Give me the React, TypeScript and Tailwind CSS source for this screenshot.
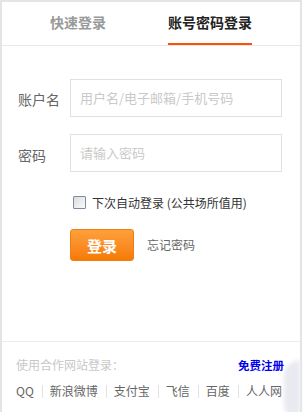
import React from "react";

export default function App() {
  const font = { fontFamily: '"Noto Sans CJK SC", "Noto Sans", sans-serif' };
  const partners = ["QQ", "新浪微博", "支付宝", "飞信", "百度", "人人网"];
  return (
    <div className="w-[303px] h-[412px] bg-white relative overflow-hidden" style={font}>
      <div className="w-[302px] h-[412px] border-2 border-b-0 border-[#e4e4e4] flex flex-col">
        {/* Tabs */}
        <div className="h-[44px] border-b border-[#e8e8e8] flex items-stretch pl-[48px] gap-[62px] shrink-0">
          <div className="flex items-center pb-[3px] text-[14px] font-bold text-[#999999] leading-none">快速登录</div>
          <div className="relative flex items-center pb-[3px] text-[14px] font-bold text-[#222222] leading-none">
            账号密码登录
            <div className="absolute left-0 right-0 bottom-0 h-[2px] bg-[#ff4e0a]" />
          </div>
        </div>

        {/* Form */}
        <div className="pl-[16px] pt-[33px] flex flex-col">
          <div className="flex items-center">
            <div className="w-[52px] text-[14px] text-[#666666] pt-[2px] leading-none">账户名</div>
            <div className="w-[212px] h-[38px] border border-[#e1e1e1] flex items-center pl-[9px] text-[13px] text-[#c9c9c9]">
              用户名/电子邮箱/手机号码
            </div>
          </div>
          <div className="flex items-center mt-[17px]">
            <div className="w-[52px] text-[14px] text-[#666666] pt-[4px] leading-none">密码</div>
            <div className="w-[212px] h-[38px] border border-[#e1e1e1] flex items-center pl-[9px] text-[13px] text-[#c9c9c9]">
              请输入密码
            </div>
          </div>
          <div className="flex items-center mt-[24px] ml-[55px]">
            <div className="w-[13px] h-[13px] border border-[#7c8ca4] bg-gradient-to-br from-[#dcdcdc] to-[#fbfbfb] rounded-[1px]" />
            <span className="ml-[6px] text-[12px] text-[#333333] leading-none">下次自动登录 (公共场所值用)</span>
          </div>
          <div className="flex items-center mt-[20px] ml-[52px]">
            <div className="w-[64px] h-[32px] rounded-[3px] border border-[#ee7d12] bg-gradient-to-b from-[#ffa03a] to-[#f57a00] flex items-center justify-center text-white text-[15px] font-bold leading-none">
              登录
            </div>
            <span className="ml-[13px] text-[12px] text-[#666666] leading-none">忘记密码</span>
          </div>
        </div>

        {/* Bottom */}
        <div className="mt-auto h-[71px] border-t border-[#ebebeb] pl-[14px] pr-[16px] pt-[15px] shrink-0">
          <div className="flex justify-between items-center text-[12px] leading-[16px]">
            <span className="text-[#c8c8c8]">使用合作网站登录：</span>
            <span className="text-[#0000ee] font-bold text-[11.5px]">免费注册</span>
          </div>
          <div className="flex items-center mt-[10px] text-[12px] leading-[16px] text-[#666666] whitespace-nowrap">
            {partners.map((p, i) => (
              <React.Fragment key={p}>
                {i > 0 && <span className="shrink-0 w-px h-[13px] bg-[#e2e2e2] ml-[8px] mr-[7px]" />}
                <span className="shrink-0">{p}</span>
              </React.Fragment>
            ))}
          </div>
        </div>
      </div>
      <div className="absolute left-[284px] top-[360px] w-[16px] h-[60px] rounded-l-full bg-[#e8eaf0] blur-[2px]" />
    </div>
  );
}
